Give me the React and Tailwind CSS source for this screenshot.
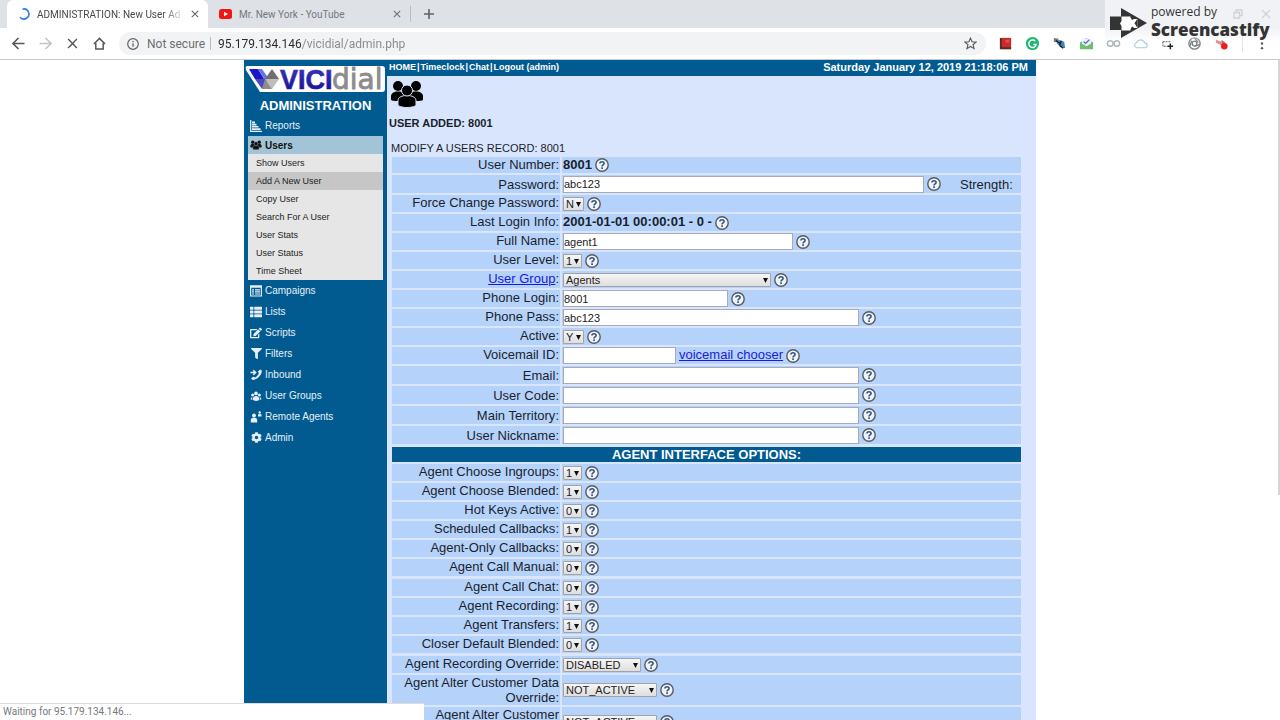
import React from "react";
import { FaThList, FaFilter, FaCog, FaEdit } from "react-icons/fa";
import { HiUserGroup } from "react-icons/hi2";

function HelpButton({ topic }) {
  return (
    <button type="button" aria-label={`Help: ${topic}`} className="shrink-0 size-[14px]">
      <svg viewBox="0 0 14 14" className="block size-[14px]">
        <circle cx="7" cy="7" r="6.2" fill="#eef3fb" stroke="#5a5a5a" strokeWidth="1.4" />
        <path d="M4.9 5.500C4.900 3.100 9.100 3.100 9.100 5.500C9.100 6.900 7 6.900 7 8.500" fill="none" stroke="#35557f" strokeWidth="1.600" />
        <rect x="6.2" y="9.3" width="1.7" height="1.7" fill="#35557f" />
      </svg>
    </button>
  );
}

function UsersIcon({ className, edge }) {
  return (
    <svg viewBox="0 0 34 28" className={className} aria-hidden="true">
      <g fill="currentColor">
        <circle cx="8" cy="6" r="5" />
        <circle cx="26" cy="6" r="5" />
        <path d="M1 19.500v-3c0-3.500 3-5 7-5s8 1.500 8 5V20c-5 1.500-15 1.500-15-.5z" />
        <path d="M33 19.500v-3c0-3.500-3-5-7-5s-8 1.500-8 5V20c5 1.500 15 1.500 15-.5z" />
      </g>
      <g fill="currentColor" stroke={edge} strokeWidth="1">
        <path d="M8 25v-4c0-4 4-5.500 9-5.500s9 1.500 9 5.500v4c0 1-4 2.500-9 2.500S8 26 8 25z" />
        <circle cx="17" cy="10.500" r="5.500" />
      </g>
    </svg>
  );
}

function ReportsIcon() {
  return (
    <svg viewBox="0 0 12 12" className="size-3" aria-hidden="true">
      <path d="M.7 0v11.300H12" fill="none" stroke="currentColor" strokeWidth="1.200" />
      <path d="M2 1.500h3v1.700H2zM2 3.800h4.500v1.600H2zM2 6h6.500v1.600H2zM2 8.200h8.500v1.800H2z" fill="currentColor" />
    </svg>
  );
}

function CampaignsIcon() {
  return (
    <svg viewBox="0 0 12 12" className="size-3" aria-hidden="true">
      <path d="M.6 1h10.800v10H.6z" fill="none" stroke="currentColor" strokeWidth="1.200" />
      <path d="M0 .5h12v2.300H0zM2 4.200h2v1.200H2zM5 4.200h5v1.200H5zM2 6.300h2v1.200H2zM5 6.300h5v1.200H5zM2 8.400h2v1.200H2zM5 8.400h5v1.200H5z" fill="currentColor" />
    </svg>
  );
}

function InboundIcon() {
  return (
    <svg viewBox="0 0 12 12" className="size-3" aria-hidden="true">
      <path d="M11.800 1.500C12 6 7.500 10.600 2.500 11L1 9.300l2.300-1.600 1.900.7C7 7.500 8.400 6 8.800 4.300L7.900 2.500 10.200.6z" fill="currentColor" />
      <path d="M.5 3.500h4.800M3.300 1.200l2.300 2.300-2.300 2.300" fill="none" stroke="currentColor" strokeWidth="1.500" />
    </svg>
  );
}

function RemoteIcon() {
  return (
    <svg viewBox="0 0 12 12" className="size-3" aria-hidden="true">
      <g fill="currentColor">
        <circle cx="4" cy="4.500" r="1.900" />
        <path d="M.8 11.500V9c0-1.700 1.400-2.300 3.200-2.300S7.200 7.300 7.200 9v2.500z" />
        <circle cx="9.700" cy="1.500" r="1.200" />
        <path d="M8 5.500V4c0-.8.700-1.100 1.700-1.100s1.800.3 1.800 1.100v1.500z" />
      </g>
    </svg>
  );
}

function TextField({ id, width, value }) {
  return (
    <input
      id={id}
      type="text"
      defaultValue={value}
      className={`${width} h-[17px] min-w-0 border border-[#a5acb8] bg-white text-[11px] text-[#222] outline-none`}
    />
  );
}

function Dropdown({ id, width, value }) {
  return (
    <span className={`${width} relative flex`}>
      <select
        id={id}
        defaultValue={value}
        className="h-[14px] w-full appearance-none rounded-[1px] border border-[#a3a3a3] bg-linear-to-b from-[#f6f6f6] to-[#dedede] pl-[2px] text-[11px] leading-[12px] text-[#222] outline-none"
      >
        <option>{value}</option>
      </select>
      <svg viewBox="0 0 5 5" className="pointer-events-none absolute right-[3px] top-[5px] size-[5px]" aria-hidden="true">
        <path d="M0 0h5L2.500 5z" fill="#111" />
      </svg>
    </span>
  );
}

const W1 = "w-[19px]";
const WYN = "w-[21px]";
const TALL = "min-h-[18px]";

const profile = [
  { label: "User Number", text: "8001", h: "min-h-4" },
  { label: "Password", input: "w-[361px]", value: "abc123", strength: true, h: TALL },
  { label: "Force Change Password", select: WYN, value: "N" },
  { label: "Last Login Info", text: "2001-01-01 00:00:01 - 0 -" },
  { label: "Full Name", input: "w-[230px]", value: "agent1" },
  { label: "User Level", select: W1, value: "1" },
  { label: "User Group", link: true, select: "w-[208px]", value: "Agents" },
  { label: "Phone Login", input: "w-[165px]", value: "8001" },
  { label: "Phone Pass", input: "w-[296px]", value: "abc123" },
  { label: "Active", select: WYN, value: "Y" },
  { label: "Voicemail ID", input: "w-[113px]", value: "", chooser: true },
  { label: "Email", input: "w-[296px]", value: "", h: TALL },
  { label: "User Code", input: "w-[296px]", value: "", h: TALL },
  { label: "Main Territory", input: "w-[296px]", value: "", h: TALL },
  { label: "User Nickname", input: "w-[296px]", value: "", h: TALL },
];

const agentBasics = [
  { label: "Agent Choose Ingroups", select: W1, value: "1" },
  { label: "Agent Choose Blended", select: W1, value: "1" },
  { label: "Hot Keys Active", select: W1, value: "0" },
  { label: "Scheduled Callbacks", select: W1, value: "1" },
  { label: "Agent-Only Callbacks", select: W1, value: "0" },
  { label: "Agent Call Manual", select: W1, value: "0" },
];

const agentCalls = [
  { label: "Agent Call Chat", select: W1, value: "0" },
  { label: "Agent Recording", select: W1, value: "1" },
  { label: "Agent Transfers", select: W1, value: "1" },
  { label: "Closer Default Blended", select: W1, value: "0" },
];

const agentOverrides = [
  { label: "Agent Recording Override", select: "w-[78px]", value: "DISABLED" },
  { label: "Agent Alter Customer Data Override", select: "w-[94px]", value: "NOT_ACTIVE" },
  { label: "Agent Alter Customer Phone Override", select: "w-[94px]", value: "NOT_ACTIVE" },
];

function Row({ row }) {
  const id = row.label.toLowerCase().replace(/[^a-z]+/g, "-");
  const isField = row.input || row.select;
  return (
    <div className={`${row.h || "min-h-[17px]"} grid grid-cols-[168px_1fr] gap-[2px] text-[13px] leading-[15px]`}>
      <div className={`${row.h === TALL ? "items-center" : "items-start"} flex justify-end bg-[#b5d2fb] pl-1 pr-px text-right`}>
        {row.link ? (
          <span>
            <a href="#group" className="text-[#1a1ae0] underline">
              <label htmlFor={id} className="cursor-pointer">{row.label}</label>
            </a>
            :
          </span>
        ) : isField ? (
          <label htmlFor={id}>{row.label}:</label>
        ) : (
          <span>{row.label}:</span>
        )}
      </div>
      <div className="flex items-center gap-[3px] bg-[#b5d2fb] pl-px">
        {row.text && <b className="self-start">{row.text}</b>}
        {row.input && <TextField id={id} width={row.input} value={row.value} />}
        {row.select && <Dropdown id={id} width={row.select} value={row.value} />}
        {row.chooser && <a href="#voicemail" className="self-start text-[#1a1ae0] underline">voicemail chooser</a>}
        <HelpButton topic={row.label} />
        {row.strength && <span className="pl-4">Strength:</span>}
      </div>
    </div>
  );
}

function Rows({ rows, children }) {
  return (
    <div className="flex flex-col gap-[2px]">
      {children}
      {rows.map((row) => <Row key={row.label} row={row} />)}
    </div>
  );
}

function NavItem({ icon, label }) {
  return (
    <a href="#section" className="flex h-[21px] items-center gap-[3px] pl-[2px] text-[10px] text-[#e6eff7]">
      <span className="flex w-3 justify-center">{icon}</span>
      {label}
    </a>
  );
}

const userLinks = ["Show Users", "Add A New User", "Copy User", "Search For A User", "User Stats", "User Status", "Time Sheet"];

function Logo() {
  return (
    <svg viewBox="0 0 140 27" className="block h-[27px] w-[140px]" role="img" aria-label="VICIdial">
      <defs>
        <linearGradient id="vici" x1="0" y1="0" x2="0" y2="1">
          <stop offset="0" stopColor="#3a35c4" />
          <stop offset="1" stopColor="#12108c" />
        </linearGradient>
      </defs>
      <path d="M2 0h135a3 3 0 0 1 3 3v20a3 3 0 0 1-3 3H15L1 4Q0 0 2 0z" fill="#fff" />
      <path d="M4 3h9l6 10h-9z" fill="#1d16c4" />
      <path d="M13 3h4l7 10h-5z" fill="#6a72f0" />
      <path d="M10 13h14l-7 10z" fill="#4a48c0" />
      <path d="M27 3l7 10H20z" fill="#6e6e6e" />
      <path d="M20 13h14l-7 10z" fill="#bdbdbd" />
      <path d="M17 23l3-10 7 10z" fill="#8c8c8c" />
      <text x="35" y="23" fontFamily="Liberation Sans, sans-serif" fontWeight="700" fontSize="27" fill="url(#vici)" stroke="url(#vici)" strokeWidth=".6">VICI</text>
      <text x="87" y="23" fontFamily="DejaVu Sans, sans-serif" fontSize="28" fill="#8d8d8d" stroke="#8d8d8d" strokeWidth=".8">dial</text>
    </svg>
  );
}

function Sidebar() {
  return (
    <nav className="w-[143px] shrink-0 bg-[#015b91] px-1">
      <a href="#home" className="-mx-[3px] flex pt-[6px]"><Logo /></a>
      <h1 className="pt-1 text-center text-[13px] font-bold leading-[17px] text-white">ADMINISTRATION</h1>
      <div className="pt-px">
        <NavItem icon={<ReportsIcon />} label="Reports" />
      </div>
      <a href="#users" className="flex h-[18px] items-center gap-[3px] bg-[#a3c3d6] pl-[2px] text-[10px] font-bold text-[#111]">
        <UsersIcon className="w-3 h-[10px]" edge="#a3c3d6" />Users
      </a>
      <ul className="bg-[#e6e6e6]">
        {userLinks.map((t) => (
          <li key={t} className={t === "Add A New User" ? "bg-[#c6c6c6]" : ""}>
            <a href="#users" className="flex h-[18px] items-center pl-2 pt-[2px] text-[9px] text-[#222]">{t}</a>
          </li>
        ))}
      </ul>
      <div>
        <NavItem icon={<CampaignsIcon />} label="Campaigns" />
        <NavItem icon={<FaThList className="size-3" />} label="Lists" />
        <NavItem icon={<FaEdit className="size-3" />} label="Scripts" />
        <NavItem icon={<FaFilter className="size-[11px]" />} label="Filters" />
        <NavItem icon={<InboundIcon />} label="Inbound" />
        <NavItem icon={<HiUserGroup className="size-3" />} label="User Groups" />
        <NavItem icon={<RemoteIcon />} label="Remote Agents" />
        <NavItem icon={<FaCog className="size-[11px]" />} label="Admin" />
      </div>
    </nav>
  );
}

function CloseGlyph({ className }) {
  return (
    <svg viewBox="0 0 10 10" className={className} aria-hidden="true">
      <path d="M1 1l8 8M9 1l-8 8" stroke="currentColor" strokeWidth="1.300" fill="none" />
    </svg>
  );
}

const extensions = [
  ["Dictionary", <><path d="M3 2h11v12H3z" fill="#c92a2a" /><path d="M2 2h2v12H2zM3 12h11v2H3z" fill="#5b2a2a" /><path d="M8 4h4v3H8z" fill="#e2533f" /></>],
  ["Grammar", <><circle cx="8" cy="8" r="7" fill="#22b573" /><path d="M11 5.500A4 4 0 1 0 12 9H9" fill="none" stroke="#fff" strokeWidth="1.500" /></>],
  ["Bee", <><path d="M2 2l5 1-1 4-4-1z" fill="#777" /><path d="M7 4l6 2 1 7-4-1-5-4z" fill="#3f86c6" /><path d="M4 5l5 3M8 10l4 3M10 5l-2 5" stroke="#222" strokeWidth="1.500" /></>],
  ["Mail", <><path d="M1 7l7-5 7 5v7H1z" fill="#6fbf73" /><path d="M3 3h10v5l-5 3-5-3z" fill="#eef" /><path d="M5 6l2 2 4-4" stroke="#5662c9" strokeWidth="1.300" fill="none" /></>],
  ["Loop", <g fill="none" stroke="#a9b7b7" strokeWidth="1.500"><circle cx="4.500" cy="8" r="3" /><circle cx="11.500" cy="8" r="3" /></g>],
  ["Cloud", <path d="M4 12.500h8.500a2.500 2.500 0 0 0 0-5.200A4.500 4.500 0 0 0 4 7a2.800 2.800 0 0 0 0 5.500z" fill="#fff" stroke="#a8cbe6" strokeWidth="1.200" />],
  ["Select", <><path d="M3 6h9M3 6v5h5" stroke="#777" strokeDasharray="2 1" fill="none" strokeWidth="1.300" /><path d="M11 8v6M8 11h6" stroke="#222" strokeWidth="1.600" /></>],
  ["Shutter", <g fill="none" stroke="#7d8286" strokeWidth="1.400"><circle cx="8" cy="8" r="6" /><circle cx="8" cy="8" r="2.500" /><path d="M8 2l4 5M14 9l-6 2M3 11l2-6" /></g>],
  ["Recorder", <><path d="M2 4l6 2v4L2 7z" fill="#e58a86" /><path d="M8 4l4 3-4 3z" fill="#b66" /><circle cx="11" cy="11" r="3.500" fill="#ee1c1c" /></>],
];

function BrowserChrome() {
  return (
    <header className="relative shrink-0 font-['Roboto',sans-serif]">
      <div className="flex h-7 items-center bg-[#dee1e6] pl-[7px]">
        <div className="flex h-7 w-[201px] items-center rounded-t-md bg-white pl-[11px] pr-2">
          <svg viewBox="0 0 12 12" className="size-3 shrink-0" aria-hidden="true">
            <path d="M4.500 1.200A5 5 0 1 1 2 9.200" fill="none" stroke="#2b7de9" strokeWidth="1.600" />
          </svg>
          <button type="button" className="ml-[7px] w-[148px] overflow-hidden whitespace-nowrap text-left text-[10px] text-[#45494d] mask-r-from-85%">
            ADMINISTRATION: New User Ad
          </button>
          <button type="button" aria-label="Close tab" className="ml-[6px] text-[#5f6368]"><CloseGlyph className="size-2" /></button>
        </div>
        <div className="flex h-7 w-[202px] items-center pl-[11px] pr-[9px]">
          <svg viewBox="0 0 13 10" className="h-[10px] w-[13px] shrink-0" aria-hidden="true">
            <rect width="13" height="10" rx="2.500" fill="#f01616" /><path d="M5 2.800l4 2.200-4 2.200z" fill="#fff" />
          </svg>
          <button type="button" className="ml-[7px] flex-1 text-left text-[10px] text-[#74787d]">Mr. New York - YouTube</button>
          <button type="button" aria-label="Close tab" className="text-[#6b6f74]"><CloseGlyph className="size-2" /></button>
        </div>
        <div className="h-4 w-px bg-[#b9bcc2]" />
        <button type="button" aria-label="New tab" className="ml-3 text-[#5f6368]">
          <svg viewBox="0 0 12 12" className="size-3"><path d="M6 1v10M1 6h10" stroke="currentColor" strokeWidth="1.600" /></svg>
        </button>
      </div>
      <div className="flex h-8 items-center border-b border-[#c4c7cb] bg-white pl-3 pr-3">
        <div className="flex items-center gap-[14px] text-[#55595e]">
          <button type="button" aria-label="Back"><svg viewBox="0 0 13 13" className="size-[13px]"><path d="M12.500 6.500H1.500M6.500 1L1 6.500 6.500 12" fill="none" stroke="currentColor" strokeWidth="1.600" /></svg></button>
          <button type="button" aria-label="Forward" className="text-[#c2c5c8]"><svg viewBox="0 0 13 13" className="size-[13px]"><path d="M.5 6.500h11M6.500 1L12 6.500 6.500 12" fill="none" stroke="currentColor" strokeWidth="1.600" /></svg></button>
          <button type="button" aria-label="Stop" className="px-px"><CloseGlyph className="size-[11px]" /></button>
          <button type="button" aria-label="Home"><svg viewBox="0 0 14 14" className="size-[13px]"><path d="M1 7.500L7 1.500l6 6M3 6.500V13h8V6.500" fill="none" stroke="currentColor" strokeWidth="1.600" /></svg></button>
        </div>
        <div className="ml-[13px] flex h-[23px] flex-1 items-center rounded-full bg-[#f1f3f4] pl-2 pr-[9px] text-[12px]">
          <svg viewBox="0 0 12 12" className="size-3 shrink-0 text-[#5f6368]" aria-hidden="true"><circle cx="6" cy="6" r="5.300" fill="none" stroke="currentColor" strokeWidth="1.200" /><path d="M6 5.200v3.600M6 3v1.200" stroke="currentColor" strokeWidth="1.300" /></svg>
          <button type="button" className="ml-2 text-[#6b6f74]">Not secure</button>
          <span className="ml-[5px] mr-[7px] h-[13px] w-px bg-[#b9bcc2]" />
          <input
            aria-label="Address"
            defaultValue="95.179.134.146/vicidial/admin.php"
            className="min-w-0 flex-1 bg-[linear-gradient(to_right,#26292c_83px,#85898d_83px)] bg-clip-text text-transparent outline-none"
          />
          <button type="button" aria-label="Bookmark" className="text-[#55595e]">
            <svg viewBox="0 0 14 14" className="size-[13px]"><path d="M7 1.200l1.700 4 4.300.3-3.300 2.800 1.100 4.200L7 10.200l-3.800 2.300 1.100-4.200L1 5.500l4.300-.3z" fill="none" stroke="currentColor" strokeWidth="1.200" /></svg>
          </button>
        </div>
        <div className="ml-3 flex items-center gap-3">
          {extensions.map(([name, art]) => (
            <button type="button" key={name} aria-label={name}><svg viewBox="0 0 16 16" className="size-[15px]">{art}</svg></button>
          ))}
        </div>
        <span className="ml-[13px] h-4 w-px bg-[#e2e4e6]" />
        <button type="button" aria-label="Menu" className="ml-[13px] w-3">
          <svg viewBox="0 0 4 14" className="mx-auto h-[13px] w-1" fill="#55595e"><circle cx="2" cy="2" r="1.300" /><circle cx="2" cy="7" r="1.300" /><circle cx="2" cy="12" r="1.300" /></svg>
        </button>
      </div>
      <div className="absolute right-0 top-0 flex h-[42px] w-[175px] items-start bg-linear-to-b from-[#f1f2f5] from-65% to-white/0 pl-[5px]">
        <div className="absolute right-[9px] top-[9px] flex items-center gap-[18px] text-[#d0d2d6]">
          <svg viewBox="0 0 10 10" className="size-[10px]" aria-hidden="true"><path d="M1 3.500h5.500V9H1zM3 3V1h6v5.500H7" fill="none" stroke="currentColor" strokeWidth="1.400" /></svg>
          <CloseGlyph className="size-[10px]" />
        </div>
        <svg viewBox="0 0 37 30" className="mt-2 h-[30px] w-[37px]" aria-hidden="true">
          <path d="M0 8.500h11V0L37 15 11 30V22H0z" fill="#343434" />
          <path d="M11.500 8.500h9l2 2.500h5v9h-5l-2 2.500h-9V18l-1.500-2.500 1.500-2.500z" fill="#fff" />
          <path d="M27.500 10.500v9.500l-3-4.700zM20 22.500l2-4 3 2zM20 8.500l2 3.500 3-1.500z" fill="#343434" />
        </svg>
        <div className="relative ml-1 pt-1 font-['Open_Sans',sans-serif] text-[#343434] [font-variant-ligatures:none]">
          <div className="text-[12px] leading-4">powered by</div>
          <div className="text-[17px] font-extrabold leading-5">Screencastify</div>
        </div>
      </div>
    </header>
  );
}

export default function App() {
  return (
    <div className="relative flex h-screen flex-col overflow-hidden bg-white font-['Liberation_Sans',Arial,sans-serif] text-[#1a1f2b]">
      <BrowserChrome />
      <div className="relative min-h-0 flex-1 overflow-hidden">
        <div className="mx-auto flex max-w-[792px]">
          <Sidebar />
          <main className="min-w-0 flex-1 bg-[#d8e5fc]">
            <div className="flex h-4 items-center justify-between bg-[#015b91] pl-[2px] pr-2 font-bold leading-none text-white">
              <div className="flex gap-px pb-[2px] text-[9px]">
                <a href="#home">HOME</a>|<a href="#timeclock">Timeclock</a>|<a href="#chat">Chat</a>|<a href="#logout">Logout (admin)</a>
              </div>
              <span className="pb-[2px] text-[11px]">Saturday January 12, 2019 21:18:06 PM</span>
            </div>
            <UsersIcon className="ml-[3px] mt-1 h-7 w-[34px] text-black" edge="#d8e5fc" />
            <h2 className="pl-[2px] pt-[7px] text-[11px] font-bold leading-4">USER ADDED: 8001</h2>
            <p className="pb-px pl-1 pt-[9px] text-[11px] leading-4">MODIFY A USERS RECORD: 8001</p>
            <form className="flex flex-col gap-[3px] pl-[5px] pr-[15px]" onSubmit={(e) => e.preventDefault()}>
              <Rows rows={profile} />
              <Rows rows={agentBasics}>
                <h3 className="bg-[#015b91] text-center text-[13px] font-bold leading-[15px] text-white">AGENT INTERFACE OPTIONS:</h3>
              </Rows>
              <Rows rows={agentCalls} />
              <Rows rows={agentOverrides} />
            </form>
          </main>
        </div>
        <div className="absolute right-0 top-0 h-[435px] w-[2px] bg-[#d5d5d5]" />
      </div>
      <div className="absolute bottom-0 left-0 w-[424px] border-t border-[#dcdcdc] bg-white pl-[3px] text-[10px] leading-4 text-[#75797d] font-['Roboto',sans-serif]">
        Waiting for 95.179.134.146...
      </div>
    </div>
  );
}
